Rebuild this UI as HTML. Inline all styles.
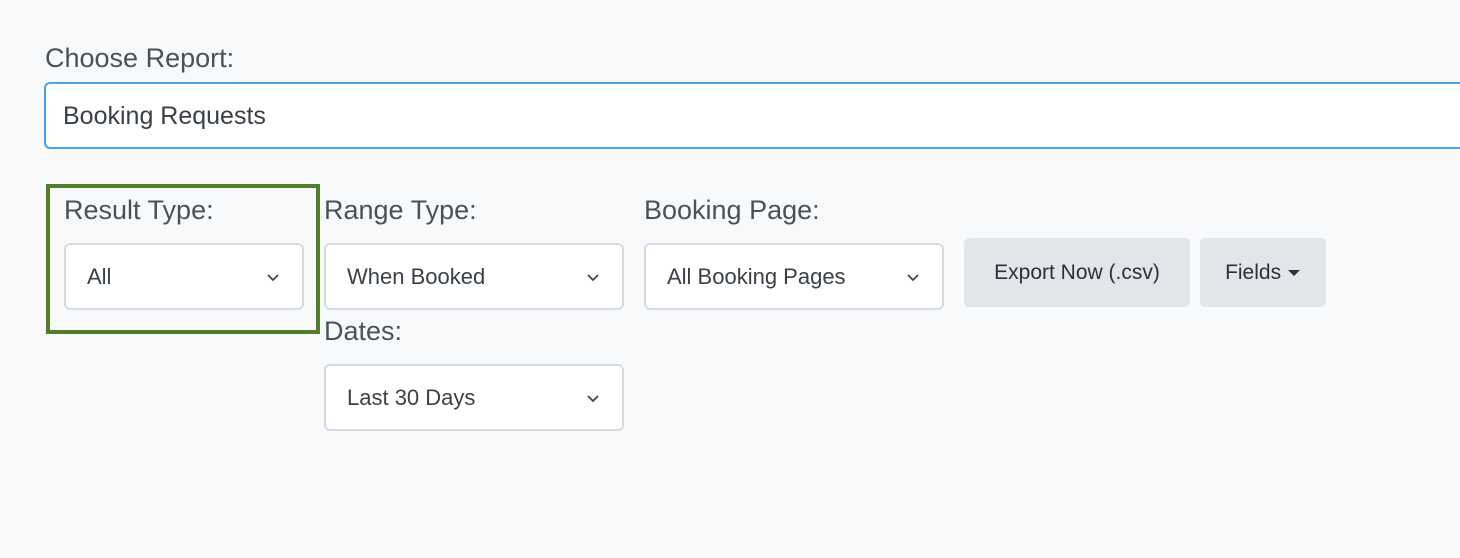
<!DOCTYPE html>
<html><head><style>
body{margin:0;width:1460px;height:558px;background:#f7f9fb;font-family:"Liberation Sans",sans-serif;position:relative;overflow:hidden;color:#444c54}
.a{position:absolute}
.lbl{font-size:27px;color:#4a5259}
.sel{position:absolute;background:#fff;border:2px solid #d6dbe2;border-radius:6px;box-sizing:border-box;height:67px;font-size:22px;color:#3a4047;padding-left:21px;line-height:63px}
.sel svg{position:absolute;right:22px;top:27px}
.btn{position:absolute;background:#e2e6ea;border-radius:5px;height:69px;top:238px;font-size:21px;color:#27323d;line-height:69px;text-align:center}
</style></head><body>
<div class="a lbl" style="left:45px;top:43px">Choose Report:</div>
<div class="a" style="left:44px;top:82px;width:1430px;height:67px;box-sizing:border-box;border:2px solid #4aa3e8;border-radius:6px;background:#fff;font-size:25px;color:#3a4047;line-height:65px;padding-left:17px">Booking Requests</div>
<div class="a" style="left:46px;top:184px;width:274px;height:150px;box-sizing:border-box;border:4px solid #527d2c"></div>
<div class="a lbl" style="left:64px;top:195px">Result Type:</div>
<div class="a lbl" style="left:324px;top:195px">Range Type:</div>
<div class="a lbl" style="left:644px;top:195px">Booking Page:</div>
<div class="a lbl" style="left:324px;top:316px">Dates:</div>
<div class="sel" style="left:64px;top:243px;width:240px">All<svg width="14" height="10" viewBox="0 0 14 10"><path d="M2 3l5 5 5-5" fill="none" stroke="#444" stroke-width="1.8"/></svg></div>
<div class="sel" style="left:324px;top:243px;width:300px">When Booked<svg width="14" height="10" viewBox="0 0 14 10"><path d="M2 3l5 5 5-5" fill="none" stroke="#444" stroke-width="1.8"/></svg></div>
<div class="sel" style="left:644px;top:243px;width:300px">All Booking Pages<svg width="14" height="10" viewBox="0 0 14 10"><path d="M2 3l5 5 5-5" fill="none" stroke="#444" stroke-width="1.8"/></svg></div>
<div class="sel" style="left:324px;top:364px;width:300px">Last 30 Days<svg width="14" height="10" viewBox="0 0 14 10"><path d="M2 3l5 5 5-5" fill="none" stroke="#444" stroke-width="1.8"/></svg></div>
<div class="btn" style="left:964px;width:226px">Export Now (.csv)</div>
<div class="btn" style="left:1200px;width:126px">Fields <svg width="14" height="8" viewBox="0 0 14 8" style="vertical-align:middle"><path d="M1 1h12L7 7z" fill="#27323d"/></svg></div>
</body></html>
